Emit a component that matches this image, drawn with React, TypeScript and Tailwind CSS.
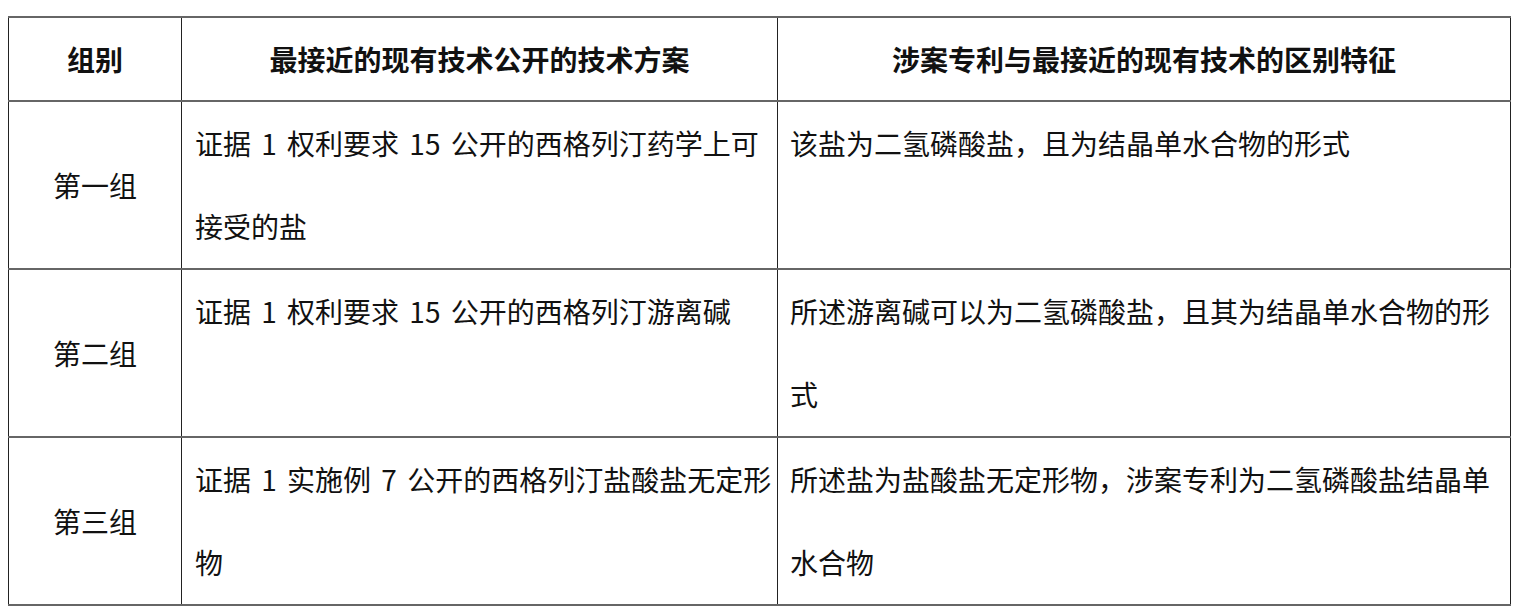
const rows = [
  {
    group: "第一组",
    prior: "证据 1 权利要求 15 公开的西格列汀药学上可接受的盐",
    diff: "该盐为二氢磷酸盐，且为结晶单水合物的形式",
  },
  {
    group: "第二组",
    prior: "证据 1 权利要求 15 公开的西格列汀游离碱",
    diff: "所述游离碱可以为二氢磷酸盐，且其为结晶单水合物的形式",
  },
  {
    group: "第三组",
    prior: "证据 1 实施例 7 公开的西格列汀盐酸盐无定形物",
    diff: "所述盐为盐酸盐无定形物，涉案专利为二氢磷酸盐结晶单水合物",
  },
];

export default function App() {
  return (
    <div
      className="min-h-[610px] w-[1517px] bg-white pl-2 pt-4 text-[28px] leading-[83px] text-[#111]"
      style={{ fontFamily: '"Noto Sans CJK SC", "Noto Sans", sans-serif' }}
    >
      <table className="w-[1502px] table-fixed border-collapse">
        <colgroup>
          <col className="w-[173px]" />
          <col className="w-[596px]" />
          <col className="w-[733px]" />
        </colgroup>
        <thead>
          <tr>
            <th className="border-x border-t-2 border-b-2 border-x-[#222] border-y-[#666] text-center align-middle font-bold leading-[82px]">
              组别
            </th>
            <th className="border-x border-t-2 border-b-2 border-x-[#222] border-y-[#666] text-center align-middle font-bold leading-[82px]">
              最接近的现有技术公开的技术方案
            </th>
            <th className="border-x border-t-2 border-b-2 border-x-[#222] border-y-[#666] text-center align-middle font-bold leading-[82px]">
              涉案专利与最接近的现有技术的区别特征
            </th>
          </tr>
        </thead>
        <tbody>
          {rows.map((row) => (
            <tr key={row.group}>
              <td className="border-x border-b-2 border-x-[#222] border-b-[#666] text-center align-middle leading-[40px]">
                {row.group}
              </td>
              <td className="border-x border-b-2 border-x-[#222] border-b-[#666] pl-[13px] pr-[4px] align-top [word-spacing:4px]">
                {row.prior}
              </td>
              <td className="border-x border-b-2 border-x-[#222] border-b-[#666] pl-[12px] pr-[4px] align-top">
                {row.diff}
              </td>
            </tr>
          ))}
        </tbody>
      </table>
    </div>
  );
}
